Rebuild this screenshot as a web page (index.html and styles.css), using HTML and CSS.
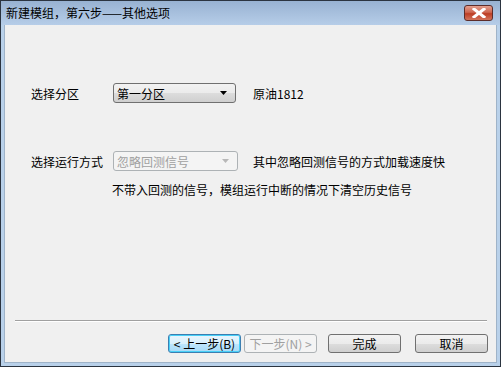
FILE: index.html
```html
<!DOCTYPE html>
<html>
<head>
<meta charset="utf-8">
<link rel="stylesheet" href="styles.css">
</head>
<body>
<div class="window">
  <div class="titlebar">
    <span class="title">新建模组，第六步——其他选项</span>
    <div class="close">
      <svg width="16" height="10" viewBox="0 0 16 10"><path d="M3 1 L13 9 M13 1 L3 9" stroke="#fff" stroke-width="3" stroke-linecap="square"/></svg>
    </div>
  </div>
  <div class="client">
    <div class="body">
      <div class="row row1">
        <span class="label">选择分区</span>
        <div class="combo">
          <span class="combo-text">第一分区</span>
          <svg class="arrow" width="7" height="4" viewBox="0 0 7 4"><path d="M0 0 H7 L3.5 4 Z" fill="#000"/></svg>
        </div>
        <span class="note">原油1812</span>
      </div>
      <div class="row row2">
        <span class="label">选择运行方式</span>
        <div class="combo disabled">
          <span class="combo-text">忽略回测信号</span>
          <svg class="arrow" width="7" height="4" viewBox="0 0 7 4"><path d="M0 0 H7 L3.5 4 Z" fill="#b8b8b8"/></svg>
        </div>
        <span class="note">其中忽略回测信号的方式加载速度快</span>
      </div>
      <div class="desc">不带入回测的信号，模组运行中断的情况下清空历史信号</div>
    </div>
    <div class="separator"></div>
    <div class="buttons">
      <button class="btn focused">&lt; 上一步(B)</button>
      <button class="btn disabled">下一步(N) &gt;</button>
      <button class="btn gap">完成</button>
      <button class="btn gap2">取消</button>
    </div>
  </div>
</div>
</body>
</html>
```
FILE: styles.css
```css
html, body {
  margin: 0;
  padding: 0;
  background: #f0f0f0;
}
body {
  font-family: "Noto Sans CJK SC", "Liberation Sans", sans-serif;
  font-size: 12px;
  color: #000;
}
.window {
  width: 501px;
  height: 367px;
  box-sizing: border-box;
  border: 1px solid #2b3440;
  background: #b9d1ea;
  display: flex;
  flex-direction: column;
}
.titlebar {
  height: 24px;
  background: linear-gradient(#98b2d2, #b6cde8);
  display: flex;
  align-items: center;
  padding: 0 7px 0 5px;
  flex-shrink: 0;
}
.title {
  flex: 1;
  font-size: 12px;
  line-height: 16px;
  color: #000;
}
.close {
  width: 29px;
  height: 16px;
  box-sizing: border-box;
  border: 1px solid #5c2d2a;
  border-radius: 3px;
  background: linear-gradient(#e4a08f, #cd6650 45%, #bd3d24 55%, #d2745c);
  display: flex;
  align-items: center;
  justify-content: center;
}
.client {
  flex: 1;
  margin: 0 3px 3px 3px;
  background: #f0f0f0;
  display: flex;
  flex-direction: column;
  border-left: 1px solid #9fb3c8;
  border-right: 1px solid #9fb3c8;
  border-bottom: 1px solid #9fb3c8;
}
.body {
  flex: 1;
  padding: 58px 0 0 26px;
}
.row {
  display: flex;
  align-items: center;
}
.label {
  width: 82px;
}
.combo {
  width: 123px;
  height: 20px;
  box-sizing: border-box;
  border: 1px solid #707070;
  border-radius: 3px;
  background: linear-gradient(#f2f2f2, #ebebeb 50%, #dddddd 50%, #cfcfcf);
  display: flex;
  align-items: center;
  padding: 0 8px 0 3px;
}
.combo-text {
  flex: 1;
  font-size: 12px;
}
.combo.disabled {
  width: 125px;
  border-color: #adb2b5;
  background: #f4f4f4;
}
.combo.disabled .combo-text {
  color: #a0a0a0;
}
.row1 .note {
  margin-left: 17px;
}
.row2 {
  margin-top: 48px;
}
.row2 .note {
  margin-left: 15px;
}
.desc {
  margin-top: 10px;
  margin-left: 81px;
}
.separator {
  height: 1px;
  background: #a0a0a0;
  border-bottom: 1px solid #fff;
  margin: 0 9px 0 10px;
}
.buttons {
  display: flex;
  align-items: center;
  padding: 12px 0 9px 163px;
}
.btn {
  width: 73px;
  height: 19px;
  box-sizing: border-box;
  font-family: "Noto Sans CJK SC", "Liberation Sans", sans-serif;
  font-size: 12px;
  line-height: 15px;
  padding: 0;
  border: 1px solid #707070;
  border-radius: 3px;
  background: linear-gradient(#f2f2f2, #ebebeb 50%, #dddddd 50%, #cfcfcf);
  color: #000;
}
.btn.focused {
  border-color: #3c7fb1;
  background: linear-gradient(#eaf6fd, #d9f0fc 50%, #bee6fd 50%, #a7d9f5);
  box-shadow: inset 0 0 0 1px #48d0f8;
}
.btn.disabled {
  margin-left: 3px;
  border-color: #adb2b5;
  background: #f4f4f4;
  color: #a0a0a0;
}
.btn.gap {
  margin-left: 11px;
}
.btn.gap2 {
  margin-left: 14px;
}
```
